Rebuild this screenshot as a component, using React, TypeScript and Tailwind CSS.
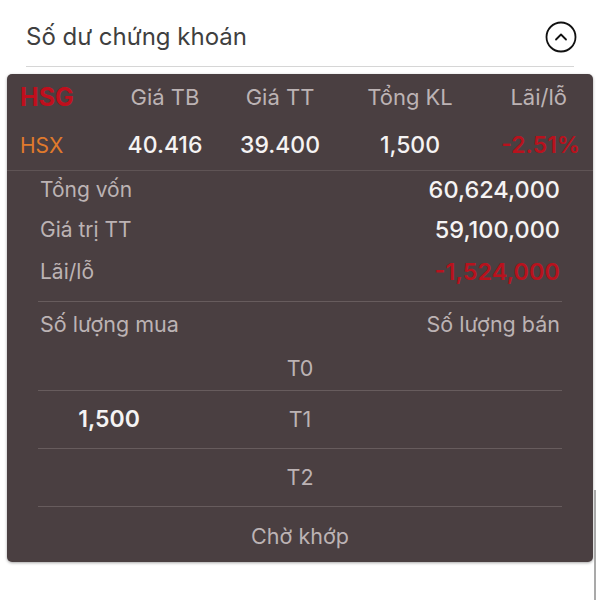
const label = 'text-[#bcb3b4]';

export default function App() {
  return (
    <div className="relative w-[600px] h-[600px] bg-white overflow-hidden" style={{ fontFamily: 'Inter, "Noto Sans", sans-serif' }}>
      {/* Header */}
      <div className="mx-[26px] h-[67px] flex items-center justify-between border-b border-[#d6d6d6] pt-[8px]">
        <span className="text-[24px] text-[#3f3f3f]">Số dư chứng khoán</span>
        <svg width="32" height="32" viewBox="0 0 32 32" className="-mr-[3px]">
          <circle cx="16" cy="16" r="14.5" fill="none" stroke="#111" strokeWidth="1.8" />
          <path d="M11 18.5 L16 13.5 L21 18.5" fill="none" stroke="#111" strokeWidth="1.8" strokeLinecap="round" strokeLinejoin="round" />
        </svg>
      </div>

      {/* Card */}
      <div className="mx-[7px] mt-[7px] rounded-[5px] bg-[#4a3f41] shadow-[0_1px_3px_rgba(0,0,0,0.35)]">
        <div className="border-b border-[#5f5455]">
          <div className="grid grid-cols-[90px_110px_120px_140px_1fr] pl-[13px] pr-[26px] h-[47px] items-center text-[22px]">
            <span className="text-[25px] font-bold text-[#c00f1d]">HSG</span>
            <span className={`text-center ${label}`}>Giá TB</span>
            <span className={`text-center ${label}`}>Giá TT</span>
            <span className={`text-center ${label}`}>Tổng KL</span>
            <span className={`text-right whitespace-nowrap ${label}`}>Lãi/lỗ</span>
          </div>
          <div className="grid grid-cols-[90px_110px_120px_140px_1fr] pl-[13px] pr-[13px] h-[49px] items-center text-[23px]">
            <span className="text-[21px] text-[#e07a2c]">HSX</span>
            <span className="text-center font-medium text-[#f5f3f3]">40.416</span>
            <span className="text-center font-medium text-[#f5f3f3]">39.400</span>
            <span className="text-center font-medium text-[#f5f3f3]">1,500</span>
            <span className="text-right font-semibold whitespace-nowrap text-[#b8121d]">-2.51%</span>
          </div>
        </div>

        <div className="mx-[31px] pb-[8px] border-b border-[#675c5d]">
          <div className="h-[38px] flex items-center justify-between px-[2px]">
            <span className={`text-[21px] ${label}`}>Tổng vốn</span>
            <span className="text-[23.5px] font-medium text-[#f5f3f3]">60,624,000</span>
          </div>
          <div className="h-[42px] flex items-center justify-between px-[2px]">
            <span className={`text-[21px] ${label}`}>Giá trị TT</span>
            <span className="text-[23.5px] font-medium text-[#f5f3f3]">59,100,000</span>
          </div>
          <div className="h-[42px] flex items-center justify-between px-[2px]">
            <span className={`text-[21px] ${label}`}>Lãi/lỗ</span>
            <span className="text-[23.5px] font-semibold text-[#b8121d]">-1,524,000</span>
          </div>
        </div>

        <div className="mx-[31px]">
          <div className="h-[44px] flex items-center justify-between px-[2px]">
            <span className={`text-[21.5px] ${label}`}>Số lượng mua</span>
            <span className={`text-[21.5px] ${label}`}>Số lượng bán</span>
          </div>
          <div className="h-[45px] grid grid-cols-[142px_1fr_142px] items-center border-b border-[#675c5d] text-[21.5px]">
            <span />
            <span className={`text-center ${label}`}>T0</span>
            <span />
          </div>
          <div className="h-[58px] grid grid-cols-[142px_1fr_142px] items-center border-b border-[#675c5d] text-[21.5px]">
            <span className="text-center font-semibold text-[23px] text-[#f5f3f3]">1,500</span>
            <span className={`text-center ${label}`}>T1</span>
            <span />
          </div>
          <div className="h-[58px] grid grid-cols-[142px_1fr_142px] items-center border-b border-[#675c5d] text-[21.5px]">
            <span />
            <span className={`text-center ${label}`}>T2</span>
            <span />
          </div>
          <div className="h-[55px] flex items-center justify-center pt-[4px]">
            <span className={`text-[21.5px] ${label}`}>Chờ khớp</span>
          </div>
        </div>
      </div>

      {/* scroll indicator */}
      <div className="absolute right-[4px] top-[490px] w-[2px] h-[110px] bg-[#a9a9a9]" />
    </div>
  );
}
